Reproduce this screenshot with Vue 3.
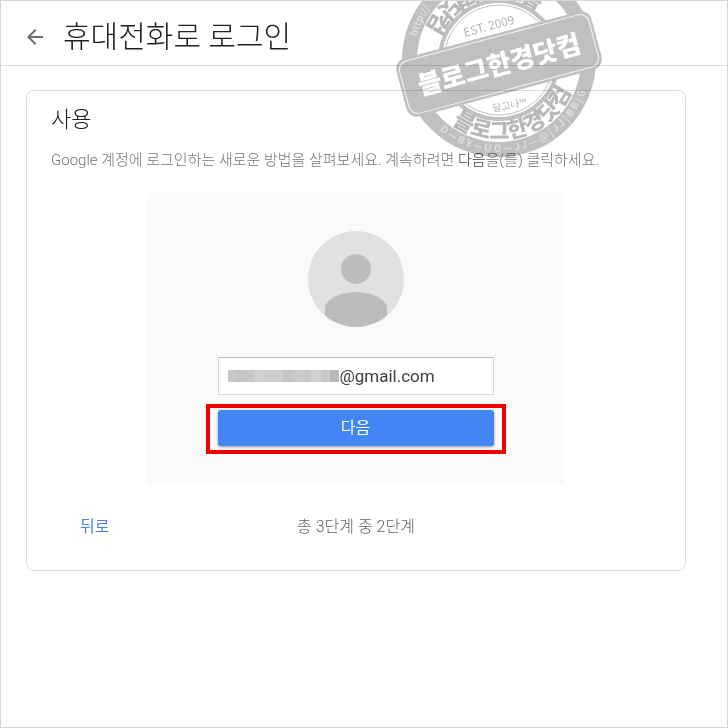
<script setup>
import { ref } from 'vue'

const email = ref('@gmail.com')
const mask = ['#c9c9c9', '#c6c6c6', '#c9c9c9', '#d2d2d2', '#cccccc', '#cdcdcd', '#c6c6c6', '#cbcbcb', '#c8c8c8', '#d1d1d1', '#c8c8c8', '#b8b8b8']
</script>

<template>
  <div class="page">
    <header class="bar">
      <button class="back" type="button" aria-label="뒤로 가기">
        <svg viewBox="0 0 24 24" width="24" height="24"><path d="M20 11H7.83l5.59-5.59L12 4l-8 8 8 8 1.41-1.41L7.83 13H20z" fill="#6a6d71" /></svg>
      </button>
      <h1>휴대전화로 로그인</h1>
    </header>

    <main>
      <section class="card">
        <h2>사용</h2>
        <p class="intro">Google 계정에 로그인하는 새로운 방법을 살펴보세요. 계속하려면 <b>다음</b>을(를) 클릭하세요.</p>

        <form class="panel" @submit.prevent>
          <svg class="avatar" viewBox="0 0 96 96" width="96" height="96" aria-hidden="true">
            <clipPath id="face"><circle cx="48" cy="48" r="48" /></clipPath>
            <circle cx="48" cy="48" r="48" fill="#e1e1e1" />
            <g clip-path="url(#face)" fill="#bdbdbd">
              <circle cx="48" cy="38" r="15" />
              <path d="M17 96V75C21 66 34 61 48 61s27 5 31 14v21z" />
            </g>
          </svg>
          <label class="field">
            <span class="mask" aria-hidden="true">
              <i v-for="(c, i) in mask" :key="i" :style="{ background: c }"></i>
            </span>
            <input v-model="email" type="text" aria-label="이메일" />
          </label>
          <div class="highlight">
            <button class="next" type="submit">다음</button>
          </div>
        </form>

        <footer class="steps">
          <a href="#">뒤로</a>
          <span class="count">총 3단계 중 2단계</span>
        </footer>
      </section>
    </main>

    <svg class="stamp" viewBox="0 0 212 164" width="212" height="164" aria-hidden="true">
      <defs>
        <path id="ringArc" d="M27 60a79 79 0 0 0 158 0" />
        <path id="rimTop" d="M20 60a86 86 0 0 1 172 0" />
        <path id="rimBottom" d="M14 60a92 92 0 0 0 184 0" />
      </defs>
      <circle cx="106" cy="60" r="97" fill="#c0c0c0" />
      <circle cx="106" cy="60" r="82" fill="#fff" />
      <circle cx="106" cy="60" r="59" fill="none" stroke="#c0c0c0" stroke-width="4" />
      <circle cx="106" cy="60" r="55" fill="none" stroke="#c0c0c0" stroke-width="1" />
      <g transform="rotate(-15 106 60)">
        <text class="ring"><textPath href="#ringArc" startOffset="50%">블로그한경닷컴</textPath></text>
        <text class="ring" transform="rotate(180 106 60)"><textPath href="#ringArc" startOffset="50%">블로그한경닷컴</textPath></text>
        <text class="rim"><textPath href="#rimTop" startOffset="23%">http://</textPath></text>
        <text class="rim"><textPath href="#rimBottom" startOffset="50%">D — B Y — U O — J J — @ | J J | B B | G</textPath></text>
      </g>
      <g transform="rotate(-15 106 64)">
        <text x="106" y="29" class="est">EST. 2009</text>
        <rect x="5" y="34" width="202" height="60" rx="11" fill="#c0c0c0" />
        <rect x="8" y="37" width="196" height="54" rx="9" fill="none" stroke="#f4f4f4" stroke-width="1" />
        <text x="106" y="74" class="name">블로그한경닷컴</text>
      </g>
      <text x="117" y="109" class="small" transform="rotate(-10 117 109)">달고나™</text>
    </svg>
  </div>
</template>

<style>
body {
  background: #fff;
}
</style>

<style scoped>
.page {
  position: relative;
  box-sizing: border-box;
  min-height: 100vh;
  overflow: hidden;
  border: 1px solid #d6d6d6;
  font-family: Roboto, "Noto Sans CJK KR", sans-serif;
  color: #202124;
}
.bar {
  display: flex;
  align-items: center;
  gap: 16px;
  box-sizing: border-box;
  height: 65px;
  padding: 8px 0 0 22px;
  border-bottom: 1px solid #dadce0;
}
.back {
  display: flex;
  padding: 0;
  border: 0;
  background: none;
}
.back svg {
  width: 24px;
  height: 24px;
}
h1, h2, p {
  margin: 0;
  font-weight: 300;
}
h1 {
  font-size: 30px;
  line-height: 40px;
}
main {
  padding: 24px 41px 24px 25px;
}
.card {
  border: 1px solid #dadce0;
  border-radius: 8px;
  padding: 13px 24px 29px;
}
h2 {
  font-size: 22px;
  line-height: 32px;
}
.intro {
  margin-top: 12px;
  font-size: 15px;
  line-height: 24px;
  color: #757575;
  white-space: nowrap;
}
.intro b {
  font-weight: 300;
  color: #404040;
}
.panel {
  display: flex;
  flex-direction: column;
  align-items: center;
  margin: 21px 97px 0 96px;
  padding: 38px 56px 31px;
  background: #fafafa;
}
.field {
  display: flex;
  align-items: center;
  box-sizing: border-box;
  width: 276px;
  height: 38px;
  margin-top: 30px;
  padding-left: 9px;
  border: 1px solid #d9d9d9;
  border-top-color: #c0c0c0;
  background: #fff;
}
.mask {
  display: flex;
  flex: none;
  width: 112px;
  height: 12px;
}
.mask i {
  flex: 1;
}
.field input {
  flex: 1;
  min-width: 0;
  padding: 0;
  border: 0;
  background: none;
  font: 400 17px/24px Roboto, sans-serif;
  color: #404040;
  outline: 0;
}
.highlight {
  box-sizing: border-box;
  width: 300px;
  margin-top: 9px;
  padding: 2px 8px 4px;
  border: 4px solid #f00000;
}
.next {
  display: block;
  width: 100%;
  height: 36px;
  padding: 0;
  border: 0;
  border-radius: 3px;
  background: #4285f4;
  box-shadow: 0 1px 3px rgba(0, 0, 0, 0.4);
  color: #fff;
  font: 400 16px/36px Roboto, "Noto Sans CJK KR", sans-serif;
}
.steps {
  display: grid;
  grid-template-columns: 1fr auto 1fr;
  align-items: center;
  margin-top: 28px;
  padding: 0 29px;
  font-size: 16px;
  line-height: 28px;
}
.steps a {
  color: #4a86d8;
  text-decoration: none;
}
.count {
  color: #5f6368;
  font-weight: 300;
}
.stamp {
  position: absolute;
  top: -1px;
  left: 392px;
  mix-blend-mode: multiply;
  pointer-events: none;
  font-family: "Noto Sans CJK KR", sans-serif;
}
.ring {
  fill: #b8b8b8;
  font-size: 22px;
  font-weight: 900;
  text-anchor: middle;
}
.rim {
  fill: #dedede;
  font-size: 10px;
  font-weight: 700;
  text-anchor: middle;
}
.est {
  fill: #b4b4b4;
  font-size: 12px;
  text-anchor: middle;
}
.name {
  fill: #fff;
  font-size: 26px;
  font-weight: 900;
  text-anchor: middle;
}
.small {
  fill: #b4b4b4;
  font-size: 10px;
  text-anchor: middle;
}
</style>
